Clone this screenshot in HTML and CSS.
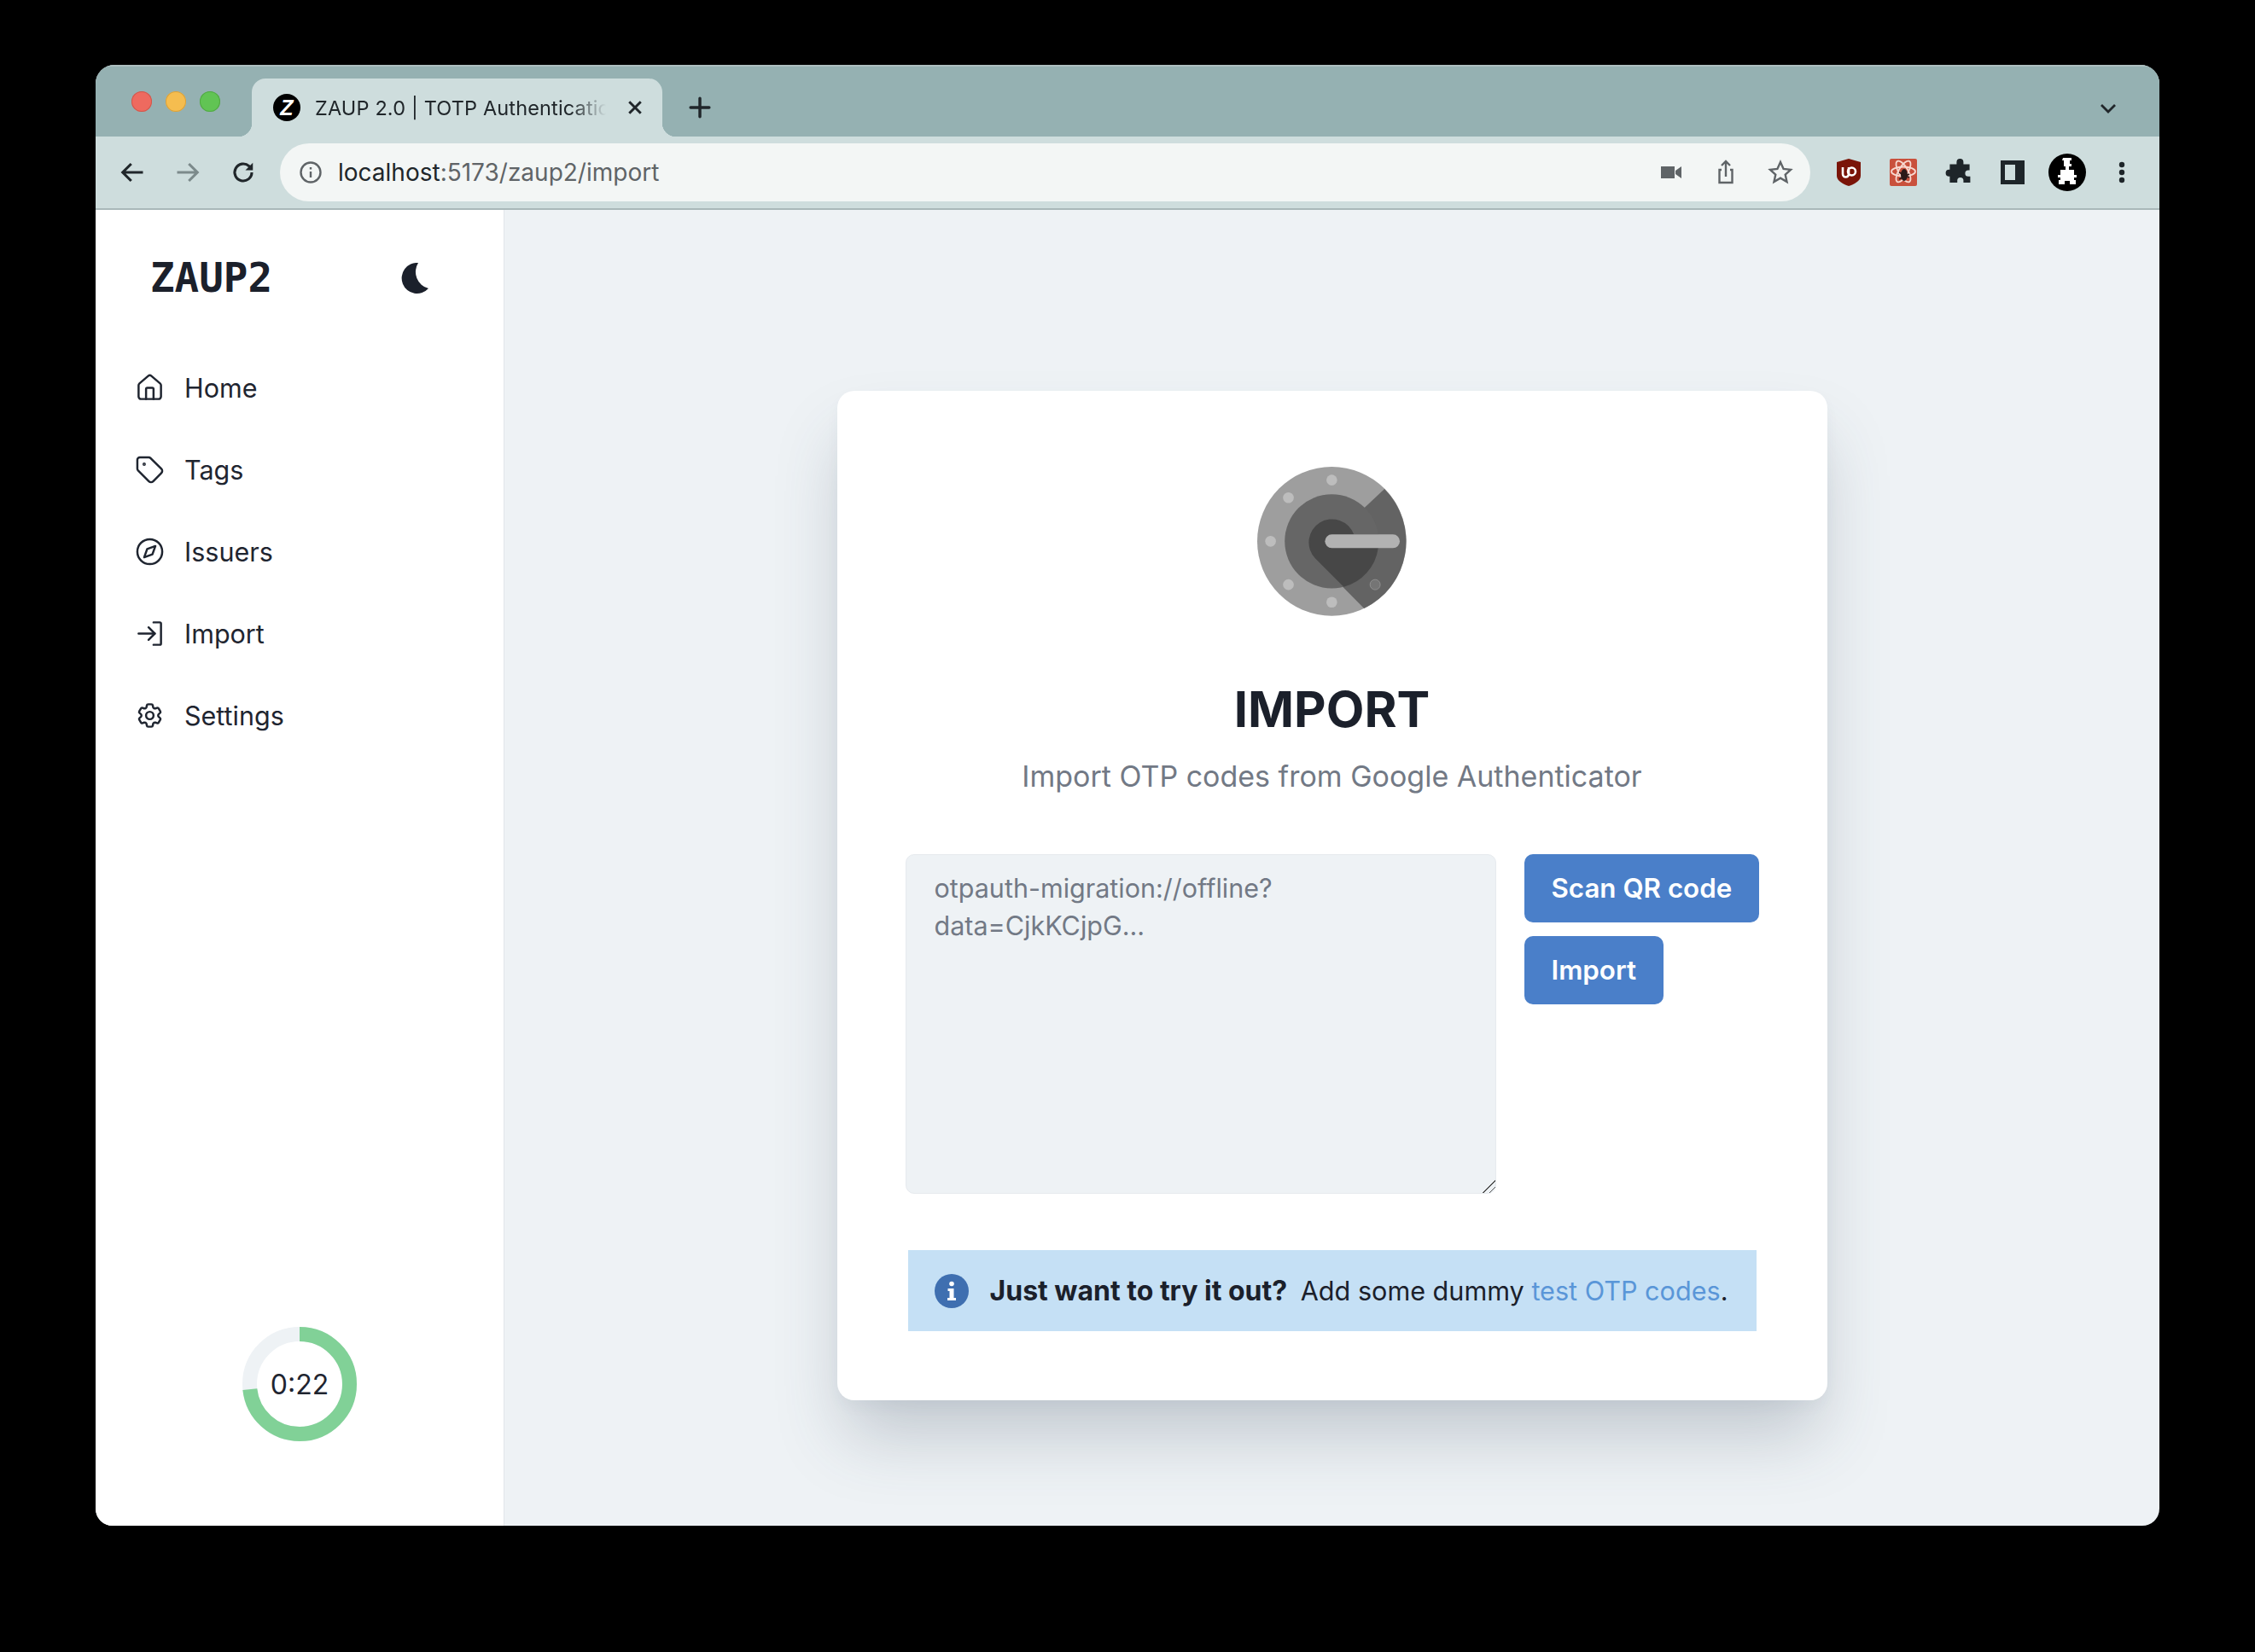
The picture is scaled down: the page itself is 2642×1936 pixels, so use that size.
FILE: index.html
```html
<!DOCTYPE html>
<html lang="en">
<head>
<meta charset="utf-8">
<title>ZAUP 2.0 | TOTP Authentication</title>
<link rel="stylesheet" href="styles.css">
</head>
<body>
<div class="window">
  <div class="tabstrip">
    <div class="lights"><span class="light red"></span><span class="light yellow"></span><span class="light green"></span></div>
    <div class="tab">
      <span class="favicon">Z</span>
      <span class="tab-title">ZAUP 2.0 | TOTP Authentication</span>
      <svg class="tab-close" viewBox="0 0 16 16"><path d="M2 2l12 12M14 2L2 14"/></svg>
    </div>
    <svg class="newtab" viewBox="0 0 24 24"><path d="M12 2v20M2 12h20"/></svg>
    <svg class="tabs-menu" viewBox="0 0 20 12"><path d="M2 2l8 8 8-8"/></svg>
  </div>
  <div class="toolbar">
    <svg class="nav-btn" viewBox="0 0 24 24"><path d="M22 12H3M11 4l-8 8 8 8"/></svg>
    <svg class="nav-btn faded" viewBox="0 0 24 24"><path d="M2 12h19M13 4l8 8-8 8"/></svg>
    <svg class="nav-btn" viewBox="0 0 24 24"><path d="M20 12a8 8 0 1 1-2.600-5.900L20 8.500"/><path class="solid" d="M21 3v7h-7z"/></svg>
    <div class="omnibox">
      <svg class="info" viewBox="0 0 26 26"><circle cx="13" cy="13" r="11.500"/><path d="M13 12v7M13 7v2.400"/></svg>
      <span class="url"><span class="host">localhost</span>:5173/zaup2/import</span>
      <svg class="omni-icon" viewBox="-2 -2 30 30"><path class="grey" d="M1 6h16v14H1zM18 11l7-5v14l-7-5z"/></svg>
      <svg class="omni-icon stroke" viewBox="0 0 26 30"><path d="M8 12H5.500v15h15V12H18M13 20V2M8 7l5-5 5 5"/></svg>
      <svg class="omni-icon stroke" viewBox="0 0 30 30"><path d="M15 3l3.600 8 8.400.9-6.300 5.700 1.800 8.400L15 21.700 7.500 26l1.800-8.400L3 11.900l8.400-.9z"/></svg>
    </div>
    <div class="ext-icons">
      <svg class="ext" viewBox="0 0 44 44"><path fill="#7a1408" d="M22 6l14 4v16c0 6-8 10-14 12C16 36 8 32 8 26V10z"/><path fill="none" stroke="#fff" stroke-width="2.600" d="M15 16v8a3.500 3.500 0 0 0 7 0v-8"/><circle cx="25.500" cy="21" r="4.500" fill="none" stroke="#fff" stroke-width="2.600"/></svg>
      <svg class="ext" viewBox="0 0 44 44"><rect x="6" y="6" width="32" height="32" rx="2" fill="#c9503c"/><g fill="none" stroke="#f7d8d0" stroke-width="1.800"><ellipse cx="22" cy="21" rx="14" ry="5.500"/><ellipse cx="22" cy="21" rx="14" ry="5.500" transform="rotate(60 22 21)"/><ellipse cx="22" cy="21" rx="14" ry="5.500" transform="rotate(120 22 21)"/></g><ellipse cx="23" cy="25" rx="4" ry="7" fill="#2b1a18"/><path d="M17 22l12 6M17 30l12-6" stroke="#2b1a18" stroke-width="1.500"/></svg>
      <svg class="ext" viewBox="-7.500 -5.500 55 55"><path fill="#1e2529" d="M18 7a5 5 0 0 1 10 0v3h9v9h-2a4.500 4.500 0 0 0 0 9h3v9H28v-3a4.500 4.500 0 0 0-9 0v3H8V28h-1a5 5 0 0 1 0-10h1v-8h10z"/></svg>
      <svg class="ext" viewBox="0 0 44 44"><path fill="#1e2529" fill-rule="evenodd" d="M8 8h28v28H8zM13 13v18h12V13z"/></svg>
      <svg class="ext" viewBox="0 0 44 44"><ellipse cx="22" cy="22" rx="22" ry="22" fill="#000"/><path fill="#fff" d="M17 5h10v3h-2v4h2v3h-3v4h6v6h3v3h-3v3h2v5h-7v-4h-6v4h-7v-5h2v-3h-3v-3h3v-6h6v-4h-2V8h-2z"/></svg>
      <svg class="ext" viewBox="0 0 44 44"><circle cx="22" cy="13" r="3.200" fill="#1e2529"/><circle cx="22" cy="22" r="3.200" fill="#1e2529"/><circle cx="22" cy="31" r="3.200" fill="#1e2529"/></svg>
    </div>
  </div>
  <div class="app">
    <aside class="sidebar">
      <div class="brand">
        <span class="logo">ZAUP2</span>
        <svg class="moon" viewBox="0 0 34 36"><path d="M21 0A18 18 0 1 0 33 30 20 20 0 0 1 21 0z"/></svg>
      </div>
      <nav class="nav">
        <a class="nav-item"><svg viewBox="0 0 24 24"><path d="M3 10a2 2 0 0 1 .7-1.500l7-6a2 2 0 0 1 2.600 0l7 6a2 2 0 0 1 .7 1.500v9a2 2 0 0 1-2 2H5a2 2 0 0 1-2-2z"/><path d="M15 21v-8a1 1 0 0 0-1-1h-4a1 1 0 0 0-1 1v8"/></svg>Home</a>
        <a class="nav-item"><svg viewBox="0 0 24 24"><path d="M12.586 2.586A2 2 0 0 0 11.172 2H4a2 2 0 0 0-2 2v7.172a2 2 0 0 0 .586 1.414l8.704 8.704a2.426 2.426 0 0 0 3.420 0l6.580-6.580a2.426 2.426 0 0 0 0-3.420z"/><circle cx="7.500" cy="7.500" r=".5"/></svg>Tags</a>
        <a class="nav-item"><svg viewBox="0 0 24 24"><circle cx="12" cy="12" r="10"/><path d="M16.500 7.500l-2.400 6.600-6.600 2.400 2.400-6.600z"/></svg>Issuers</a>
        <a class="nav-item"><svg viewBox="0 0 24 24"><path d="M15 3h5a1 1 0 0 1 1 1v16a1 1 0 0 1-1 1h-5"/><path d="M11 17l5-5-5-5"/><path d="M16 12H3"/></svg>Import</a>
        <a class="nav-item"><svg viewBox="0 0 24 24"><path d="M9.594 3.940c.09-.542.56-.94 1.110-.94h2.593c.55 0 1.020.398 1.110.94l.213 1.281c.063.374.313.686.645.870.074.040.147.083.22.127.325.196.72.257 1.075.124l1.217-.456a1.125 1.125 0 0 1 1.370.49l1.296 2.247a1.125 1.125 0 0 1-.26 1.431l-1.003.827c-.293.241-.438.613-.43.992a7.723 7.723 0 0 1 0 .255c-.008.378.137.75.43.991l1.004.827c.424.35.534.955.26 1.430l-1.298 2.247a1.125 1.125 0 0 1-1.369.491l-1.217-.456c-.355-.133-.75-.072-1.076.124a6.470 6.470 0 0 1-.22.128c-.331.183-.581.495-.644.869l-.213 1.281c-.09.543-.56.94-1.110.94h-2.594c-.55 0-1.019-.398-1.110-.94l-.213-1.281c-.062-.374-.312-.686-.644-.87a6.520 6.520 0 0 1-.22-.127c-.325-.196-.72-.257-1.076-.124l-1.217.456a1.125 1.125 0 0 1-1.369-.49l-1.297-2.247a1.125 1.125 0 0 1 .26-1.431l1.004-.827c.292-.24.437-.613.43-.991a6.932 6.932 0 0 1 0-.255c.007-.38-.138-.751-.43-.992l-1.004-.827a1.125 1.125 0 0 1-.26-1.430l1.297-2.247a1.125 1.125 0 0 1 1.370-.491l1.216.456c.356.133.751.072 1.076-.124.072-.044.146-.086.22-.128.332-.183.582-.495.644-.869l.214-1.280Z"/><circle cx="12" cy="12" r="3"/></svg>Settings</a>
      </nav>
      <div class="timer">
        <svg class="timer-ring" viewBox="0 0 134 134"><circle class="track" cx="67" cy="67" r="58.500"/><circle class="progress" cx="67" cy="67" r="58.500" pathLength="100" stroke-dasharray="73.300 100" transform="rotate(-90 67 67)"/></svg>
        <span class="timer-text">0:22</span>
      </div>
    </aside>
    <main class="main">
      <section class="card">
        <svg class="auth-logo" viewBox="100 79 527 527">
          <circle cx="363" cy="342" r="263" fill="#9e9e9e"/>
          <path fill="#636363" d="M549 157A263 263 0 0 1 477 579L363 464V342L480 222z"/>
          <circle cx="363" cy="342" r="166" fill="#666"/>
          <path fill="#474747" d="M405 503L305 403A82 82 0 1 1 441 318H527V365A166 166 0 0 1 405 503z"/>
          <rect x="339" y="318" width="264" height="48" rx="24" fill="#b2b2b2"/>
          <g fill="#bdbdbd"><circle cx="363" cy="126" r="19"/><circle cx="210" cy="188" r="19"/><circle cx="147" cy="342" r="19"/><circle cx="210" cy="495" r="19"/><circle cx="363" cy="557" r="19"/></g>
          <circle cx="516" cy="495" r="18" fill="#757575" stroke="#9e9e9e" stroke-width="2"/>
        </svg>
        <h1 class="title">IMPORT</h1>
        <p class="subtitle">Import OTP codes from Google Authenticator</p>
        <div class="import-row">
          <textarea class="code-input" placeholder="otpauth-migration://offline?data=CjkKCjpG..."></textarea>
          <div class="actions">
            <button class="btn" type="button">Scan QR code</button>
            <button class="btn" type="button">Import</button>
          </div>
        </div>
        <div class="alert">
          <svg class="alert-icon" viewBox="0 0 40 40"><circle cx="20" cy="20" r="20" fill="#3f6fb0"/><circle cx="20" cy="11.500" r="2.800" fill="#fff"/><path fill="#fff" d="M15.500 17h7v11h2.500v3H15v-3h2.500v-8h-2z"/></svg>
          <p class="alert-text"><strong>Just want to try it out?</strong> Add some dummy <a class="alert-link">test OTP codes</a>.</p>
        </div>
      </section>
    </main>
  </div>
</div>
</body>
</html>
```
FILE: styles.css
```css
* { box-sizing: border-box; }
html, body { margin: 0; height: 100%; }
body { background: #000; font-family: Inter, "Noto Sans", sans-serif; color: #1f2530; padding: 76px 112px 148px; }
svg { display: block; flex: none; }

.window { width: 2418px; height: 1712px; border-radius: 22px 22px 20px 20px; overflow: hidden; display: flex; flex-direction: column; background: #eef2f5; }

.tabstrip { height: 84px; flex: none; background: #95b1b2; display: flex; align-items: flex-start; padding-left: 42px; box-shadow: inset 0 2px 0 #aebfc0; }
.lights { display: flex; gap: 16px; margin-top: 31px; }
.light { width: 24px; height: 24px; border-radius: 50%; }
.red { background: #ee6a5f; box-shadow: inset 0 0 0 1px #d0574c; }
.yellow { background: #f5bd4f; box-shadow: inset 0 0 0 1px #d9a13c; }
.green { background: #61c454; box-shadow: inset 0 0 0 1px #52a845; }

.tab { position: relative; width: 481px; height: 68px; margin: 16px 0 0 37px; padding-left: 25px; background: #cedddd; border-radius: 16px 16px 0 0; display: flex; align-items: center; font-size: 23.500px; letter-spacing: .15px; color: #20262a; font-family: Inter, sans-serif; }
.tab::before, .tab::after { content: ""; position: absolute; bottom: 0; width: 16px; height: 16px; }
.tab::before { left: -16px; background: radial-gradient(circle at 0 0, transparent 16px, #cedddd 16.500px); }
.tab::after { right: -16px; background: radial-gradient(circle at 100% 0, transparent 16px, #cedddd 16.500px); }
.favicon { width: 32px; height: 32px; border-radius: 50%; background: #000; color: #fff; font: italic 700 25px/32px "Liberation Sans", sans-serif; text-align: center; flex: none; }
.tab-title { margin-left: 17px; width: 341px; white-space: nowrap; overflow: hidden; -webkit-mask-image: linear-gradient(90deg, #000 88%, transparent 100%); mask-image: linear-gradient(90deg, #000 88%, transparent 100%); }
.tab-close { width: 18px; height: 18px; margin-left: 25px; fill: none; stroke: #20262a; stroke-width: 2.600; }
.newtab { width: 26px; height: 26px; margin: 37px 0 0 31px; fill: none; stroke: #20262a; stroke-width: 3.200; stroke-linecap: round; }
.tabs-menu { width: 20px; height: 12px; margin: 45px 50px 0 auto; fill: none; stroke: #20262a; stroke-width: 2.800; }

.toolbar { height: 86px; flex: none; background: #cedddd; border-bottom: 2px solid #a9b8b9; display: flex; align-items: center; padding-left: 28px; gap: 35px; }
.nav-btn { width: 30px; height: 30px; fill: none; stroke: #20262a; stroke-width: 2.500; }
.nav-btn.faded { stroke: #7c8a8b; }
.nav-btn .solid { fill: #20262a; stroke: none; }
.omnibox { width: 1793px; height: 68px; margin-left: -7px; background: #f3f6f5; border-radius: 34px; display: flex; align-items: center; padding: 0 15px 0 23px; font-size: 28px; color: #5f6467; font-family: Inter, sans-serif; }
.info { width: 26px; height: 26px; fill: none; stroke: #5f6467; stroke-width: 2.400; }
.url { margin-left: 19px; flex: 1; white-space: nowrap; }
.host { color: #20262a; }
.omni-icon { width: 40px; height: 30px; margin-left: 24px; }
.omni-icon:first-of-type { margin-left: 0; }
.grey { fill: #5f6467; }
.stroke { fill: none; stroke: #5f6467; stroke-width: 2.400; }
.ext-icons { display: flex; gap: 20px; margin-left: -12px; }
.ext { width: 44px; height: 44px; }

.app { flex: 1; display: flex; min-height: 0; }
.sidebar { width: 479px; flex: none; background: #fff; border-right: 1px solid #e2e6ea; display: flex; flex-direction: column; padding-bottom: 99px; }
.brand { height: 158px; flex: none; display: flex; align-items: center; justify-content: space-between; padding: 2px 87px 0 64px; }
.logo { font: 700 47.500px/1 "DejaVu Sans Mono", monospace; color: #1b202b; }
.moon { width: 34px; height: 36px; fill: #1b202b; }
.nav { display: flex; flex-direction: column; margin-top: 2px; }
.nav-item { height: 96px; display: flex; align-items: center; gap: 23px; padding-left: 46px; font-size: 30.500px; color: #1f2530; }
.nav-item svg { width: 35px; height: 35px; fill: none; stroke: #1f2530; stroke-width: 1.700; stroke-linecap: round; stroke-linejoin: round; }
.timer { margin-top: auto; align-self: center; display: grid; place-items: center; }
.timer > * { grid-area: 1 / 1; }
.timer-ring { width: 134px; height: 134px; fill: none; stroke-width: 17; }
.track { stroke: #eef2f5; }
.progress { stroke: #81d197; }
.timer-text { font-size: 32px; color: #1f2530; }

.main { flex: 1; display: flex; justify-content: center; align-items: flex-start; padding-top: 212px; }
.card { width: 1160px; background: #fff; border-radius: 20px; padding: 89px 80px 81px; box-shadow: 0 50px 80px -10px rgba(60, 75, 95, .25), 0 8px 16px rgba(60, 75, 95, .04); display: flex; flex-direction: column; align-items: center; }
.auth-logo { width: 175px; height: 175px; }
.title { margin: 74px 0 0; font-size: 58px; line-height: 70px; font-weight: 700; color: #1b202b; }
.subtitle { margin: 20px 0 0; font-size: 34px; line-height: 48px; color: #727985; }
.import-row { width: 100%; display: flex; gap: 33px; margin-top: 67px; }
.code-input { width: 692px; height: 398px; flex: none; padding: 17px 33px; background: #eef2f5; border: 1px solid #e6eaee; border-radius: 10px; font: 30.500px/44px Inter, sans-serif; color: #1f2530; outline: none; }
.code-input::placeholder { color: #727985; opacity: 1; }
.code-input::-webkit-resizer { background: linear-gradient(135deg, transparent 48%, #555 48%, #555 54%, transparent 54%, transparent 74%, #555 74%, #555 80%, transparent 80%); }
.actions { display: flex; flex-direction: column; align-items: flex-start; gap: 16px; }
.btn { height: 80px; padding: 0 32px; background: #4a7fc9; color: #fff; border: 0; border-radius: 10px; font: 600 31.300px Inter, sans-serif; white-space: nowrap; }
.alert { width: 994px; height: 95px; margin-top: 66px; padding-left: 31px; background: #c5e0f5; display: flex; align-items: center; gap: 25px; }
.alert-icon { width: 40px; height: 40px; }
.alert-text { margin: 0; font-size: 30.600px; color: #1b202b; white-space: nowrap; }
.alert-text strong { font-size: 32px; font-weight: 700; margin-right: 7px; }
.alert-link { color: #5a96d8; }
```
